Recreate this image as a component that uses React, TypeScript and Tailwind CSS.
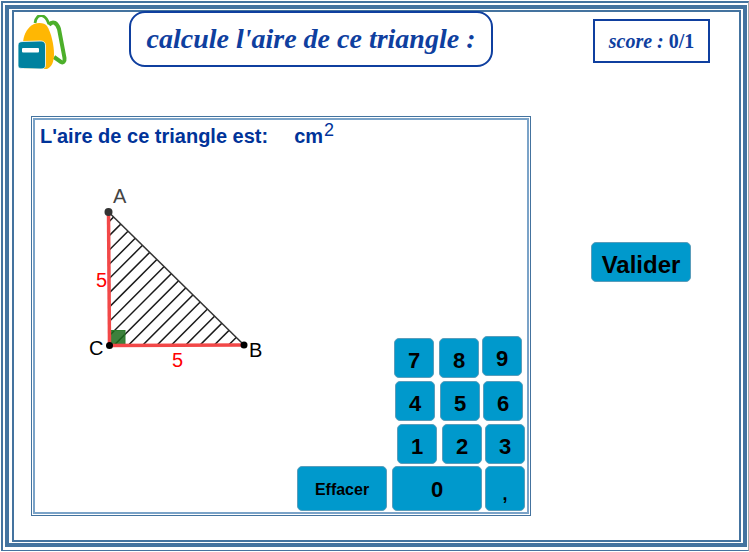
import React from "react";

const MATH_FONT = "font-['Liberation_Serif',serif]";

const KeyButton = ({ label, className }: { label: string; className: string }) => (
  <button
    className={`flex items-center justify-center rounded-[5px] border border-[#5a9dbb] bg-[#0099cc] font-bold text-black ${className}`}
  >
    {label}
  </button>
);

const Backpack = () => (
  <svg width="50" height="54" viewBox="0 0 50 54" className="block">
    <path d="M17 8 C18 2 21 0 24 0.7 C27 1.2 29 4 31 9" fill="none" stroke="#4caf2a" strokeWidth="2.8" />
    <path d="M31 10 C35 5 39 8 41 14 L46.5 43 C47 47 45 48 43 47 L36 42" fill="none" stroke="#4caf2a" strokeWidth="4" />
    <path d="M5 27 C6 18 10 12 16 9 C21 7 27 8 29 11 C33 17 36 30 36 39 C36 46 34 52 29 54 L6 54 Z" fill="#ffb703" />
    <path d="M0 30 C0 27.5 2 26.5 5 26.5 L22 26 C26 26 27.5 27.5 27.5 31 L27.5 50 C27.5 53 26 54 23 54 L5 53.5 C2 53.5 0 53 0 51 Z" fill="#00829f" stroke="#ffffff" strokeWidth="0.8" />
    <rect x="4" y="33" width="17" height="4.5" rx="1" fill="#ffffff" />
  </svg>
);

const HATCH_SUMS = Array.from({ length: 20 }, (_, idx) => 185.6 + 14.3 * (8 - idx));

const Triangle = () => (
  <svg width="210" height="190" viewBox="-20 0 210 190" className="block font-['Liberation_Sans',sans-serif]">
    <defs>
      <clipPath id="triangle-clip">
        <polygon points="3.5,29 4.5,162.5 139,162" />
      </clipPath>
    </defs>
    <g clipPath="url(#triangle-clip)" stroke="#1a1a1a" strokeWidth="1.5">
      {HATCH_SUMS.map((sum) => (
        <line key={sum} x1={-10} y1={sum + 10} x2={sum + 10} y2={-10} />
      ))}
    </g>
    <line x1="3.5" y1="29" x2="139" y2="162" stroke="#333333" strokeWidth="1.5" />
    <rect x="4.5" y="147.5" width="15.5" height="15" fill="#1a6b1a" fillOpacity="0.85" stroke="#2d7d2d" />
    <line x1="3.5" y1="29" x2="4.5" y2="162.5" stroke="#f24848" strokeWidth="3.5" />
    <line x1="4.5" y1="162.5" x2="139" y2="162" stroke="#f24848" strokeWidth="3.5" />
    <circle cx="3.5" cy="29" r="4" fill="#333333" />
    <circle cx="4.5" cy="162.5" r="3.5" fill="#000000" />
    <circle cx="139" cy="162" r="3.5" fill="#000000" />
    <text x="8" y="20" fontSize="20" fill="#444444">A</text>
    <text x="-16" y="172" fontSize="20" fill="#000000">C</text>
    <text x="144" y="174" fontSize="20" fill="#000000">B</text>
    <text x="-9" y="104" fontSize="20" fill="#ff0000">5</text>
    <text x="67" y="184" fontSize="20" fill="#ff0000">5</text>
  </svg>
);

const App = () => {
  return (
    <div className="h-[552px] w-[749px] overflow-hidden bg-white font-['Liberation_Sans',sans-serif]">
      <div className="ml-px mt-px h-[550px] w-[748px] border-l-2 border-t-2 border-b border-r border-[#44739f] border-r-[#a8a8a8] pl-[2px] pt-[2px]">
        <div className="h-[542px] w-[742px] border-4 border-[#44739f] pl-[3px] pt-px">
          <div className="h-[532px] w-[729px] border-2 border-[#44739f]">
            <div className="-mt-[1px] flex h-[105px] items-start">
              <div className="ml-[4px] mt-[4px]">
                <Backpack />
              </div>
              <div
                className={`ml-[61px] flex h-[56px] w-[364px] items-center justify-center rounded-[16px] border-2 border-[#0f3f9f] bg-white text-[28px] font-bold italic text-[#0f3f9f] ${MATH_FONT}`}
              >
                calcule l'aire de ce triangle :
              </div>
              <div
                className={`ml-[100px] mt-[8px] flex h-[44px] w-[117px] items-center justify-center border-2 border-[#0f3f9f] text-[20px] font-bold text-[#0f3f9f] ${MATH_FONT}`}
              >
                <span className="italic">score :&nbsp;</span>0/1
              </div>
            </div>
            <div className="flex items-start pl-[17px]">
              <div className="h-[400px] w-[500px] shrink-0 border border-[#44739f] p-px">
                <div className="flex h-[396px] flex-col border-2 border-[#7ba3c8]">
                  <div className="flex h-[30px] items-start pl-[5px] pt-[3px] text-[20px] font-bold leading-[26px] text-[#003399]">
                    <span>L'aire de ce triangle est:</span>
                    <span className="ml-[26px]">cm</span>
                    <span className="ml-px -mt-[6px] text-[18px] font-normal">2</span>
                  </div>
                  <div className="flex flex-1 items-start justify-between">
                    <div className="ml-[50px] mt-[33px]">
                      <Triangle />
                    </div>
                    <div className="mt-[186px] mr-[2px] flex w-[228px] flex-col">
                      <div className="ml-[97px] flex items-start">
                        <KeyButton label="7" className="mt-[2px] h-[40px] w-[40px] pt-[4px] text-[22px]" />
                        <KeyButton label="8" className="ml-[5px] mt-[2px] h-[40px] w-[40px] pt-[4px] text-[22px]" />
                        <KeyButton label="9" className="ml-[3px] h-[40px] w-[40px] pt-[4px] text-[22px]" />
                      </div>
                      <div className="ml-[98px] mt-[3px] flex">
                        <KeyButton label="4" className="h-[40px] w-[40px] pt-[4px] text-[22px]" />
                        <KeyButton label="5" className="ml-[5px] h-[40px] w-[40px] pt-[4px] text-[22px]" />
                        <KeyButton label="6" className="ml-[3px] h-[40px] w-[40px] pt-[4px] text-[22px]" />
                      </div>
                      <div className="ml-[100px] mt-[3px] flex">
                        <KeyButton label="1" className="h-[40px] w-[40px] pt-[4px] text-[22px]" />
                        <KeyButton label="2" className="ml-[5px] h-[40px] w-[40px] pt-[4px] text-[22px]" />
                        <KeyButton label="3" className="ml-[3px] h-[40px] w-[40px] pt-[4px] text-[22px]" />
                      </div>
                      <div className="mt-[2px] flex">
                        <KeyButton label="Effacer" className="h-[45px] w-[90px] pt-[2px] text-[16px]" />
                        <KeyButton label="0" className="ml-[5px] h-[45px] w-[90px] pt-[2px] text-[22px]" />
                        <KeyButton label="," className="ml-[3px] h-[45px] w-[40px] pt-[12px] text-[18px]" />
                      </div>
                    </div>
                  </div>
                </div>
              </div>
              <KeyButton label="Valider" className="ml-[60px] mt-[126px] h-[40px] w-[100px] pt-[5px] text-[24px]" />
            </div>
          </div>
        </div>
      </div>
    </div>
  );
};

export default App;
